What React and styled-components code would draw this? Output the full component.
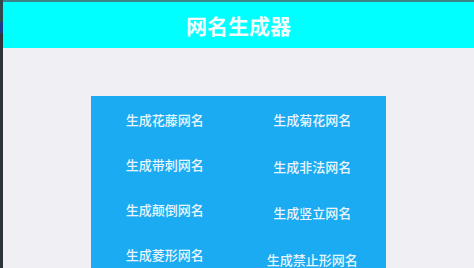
import styled, { createGlobalStyle } from "styled-components";

const GlobalStyle = createGlobalStyle`
  html, body {
    margin: 0;
    padding: 0;
    height: 100%;
    overflow: hidden;
  }
  #root {
    height: 100%;
  }
`;

const leftNames = ["生成花藤网名", "生成带刺网名", "生成颠倒网名", "生成菱形网名"];
const rightNames = ["生成菊花网名", "生成非法网名", "生成竖立网名", "生成禁止形网名"];

const Frame = styled.div`
  display: flex;
  height: 100vh;
  font-family: "Noto Sans CJK SC", "Noto Sans", sans-serif;
`;

const Edge = styled.div`
  width: 3px;
  flex-shrink: 0;
  background: linear-gradient(
    to bottom,
    #2f4a4c 0px,
    #2f4a4c 22px,
    #1d3a8a 22px,
    #1d3a8a 33px,
    #2b3438 33px
  );
`;

const Main = styled.div`
  flex: 1;
  display: flex;
  flex-direction: column;
  min-width: 0;
`;

const TopLine = styled.div`
  height: 2px;
  background: #3d8486;
`;

const Header = styled.header`
  height: 46px;
  background: #00ffff;
  display: flex;
  align-items: center;
  justify-content: center;
`;

const Title = styled.h1`
  margin: 0;
  font-size: 21px;
  font-weight: 700;
  color: #f4fbfb;
  letter-spacing: 0;
  line-height: 1;
`;

const Body = styled.main`
  flex: 1;
  background: #efeff4;
  padding-top: 48px;
  overflow: hidden;
`;

const Card = styled.section`
  width: 295px;
  height: 220px;
  margin: 0 auto;
  background: #1aabf2;
  display: grid;
  grid-template-columns: 1fr 1fr;
  padding-top: 16px;
  box-sizing: border-box;
`;

const Column = styled.div`
  display: flex;
  flex-direction: column;
  align-items: center;
  gap: ${({ $gap }) => $gap}px;
`;

const NameButton = styled.div`
  font-size: 13px;
  line-height: 16px;
  font-weight: 500;
  color: #e9f5fc;
  white-space: nowrap;
`;

export default function App() {
  return (
    <>
      <GlobalStyle />
      <Frame>
        <Edge />
        <Main>
          <TopLine />
          <Header>
            <Title>网名生成器</Title>
          </Header>
          <Body>
            <Card>
              <Column $gap={29}>
                {leftNames.map((name) => (
                  <NameButton key={name}>{name}</NameButton>
                ))}
              </Column>
              <Column $gap={30.5}>
                {rightNames.map((name) => (
                  <NameButton key={name}>{name}</NameButton>
                ))}
              </Column>
            </Card>
          </Body>
        </Main>
      </Frame>
    </>
  );
}
